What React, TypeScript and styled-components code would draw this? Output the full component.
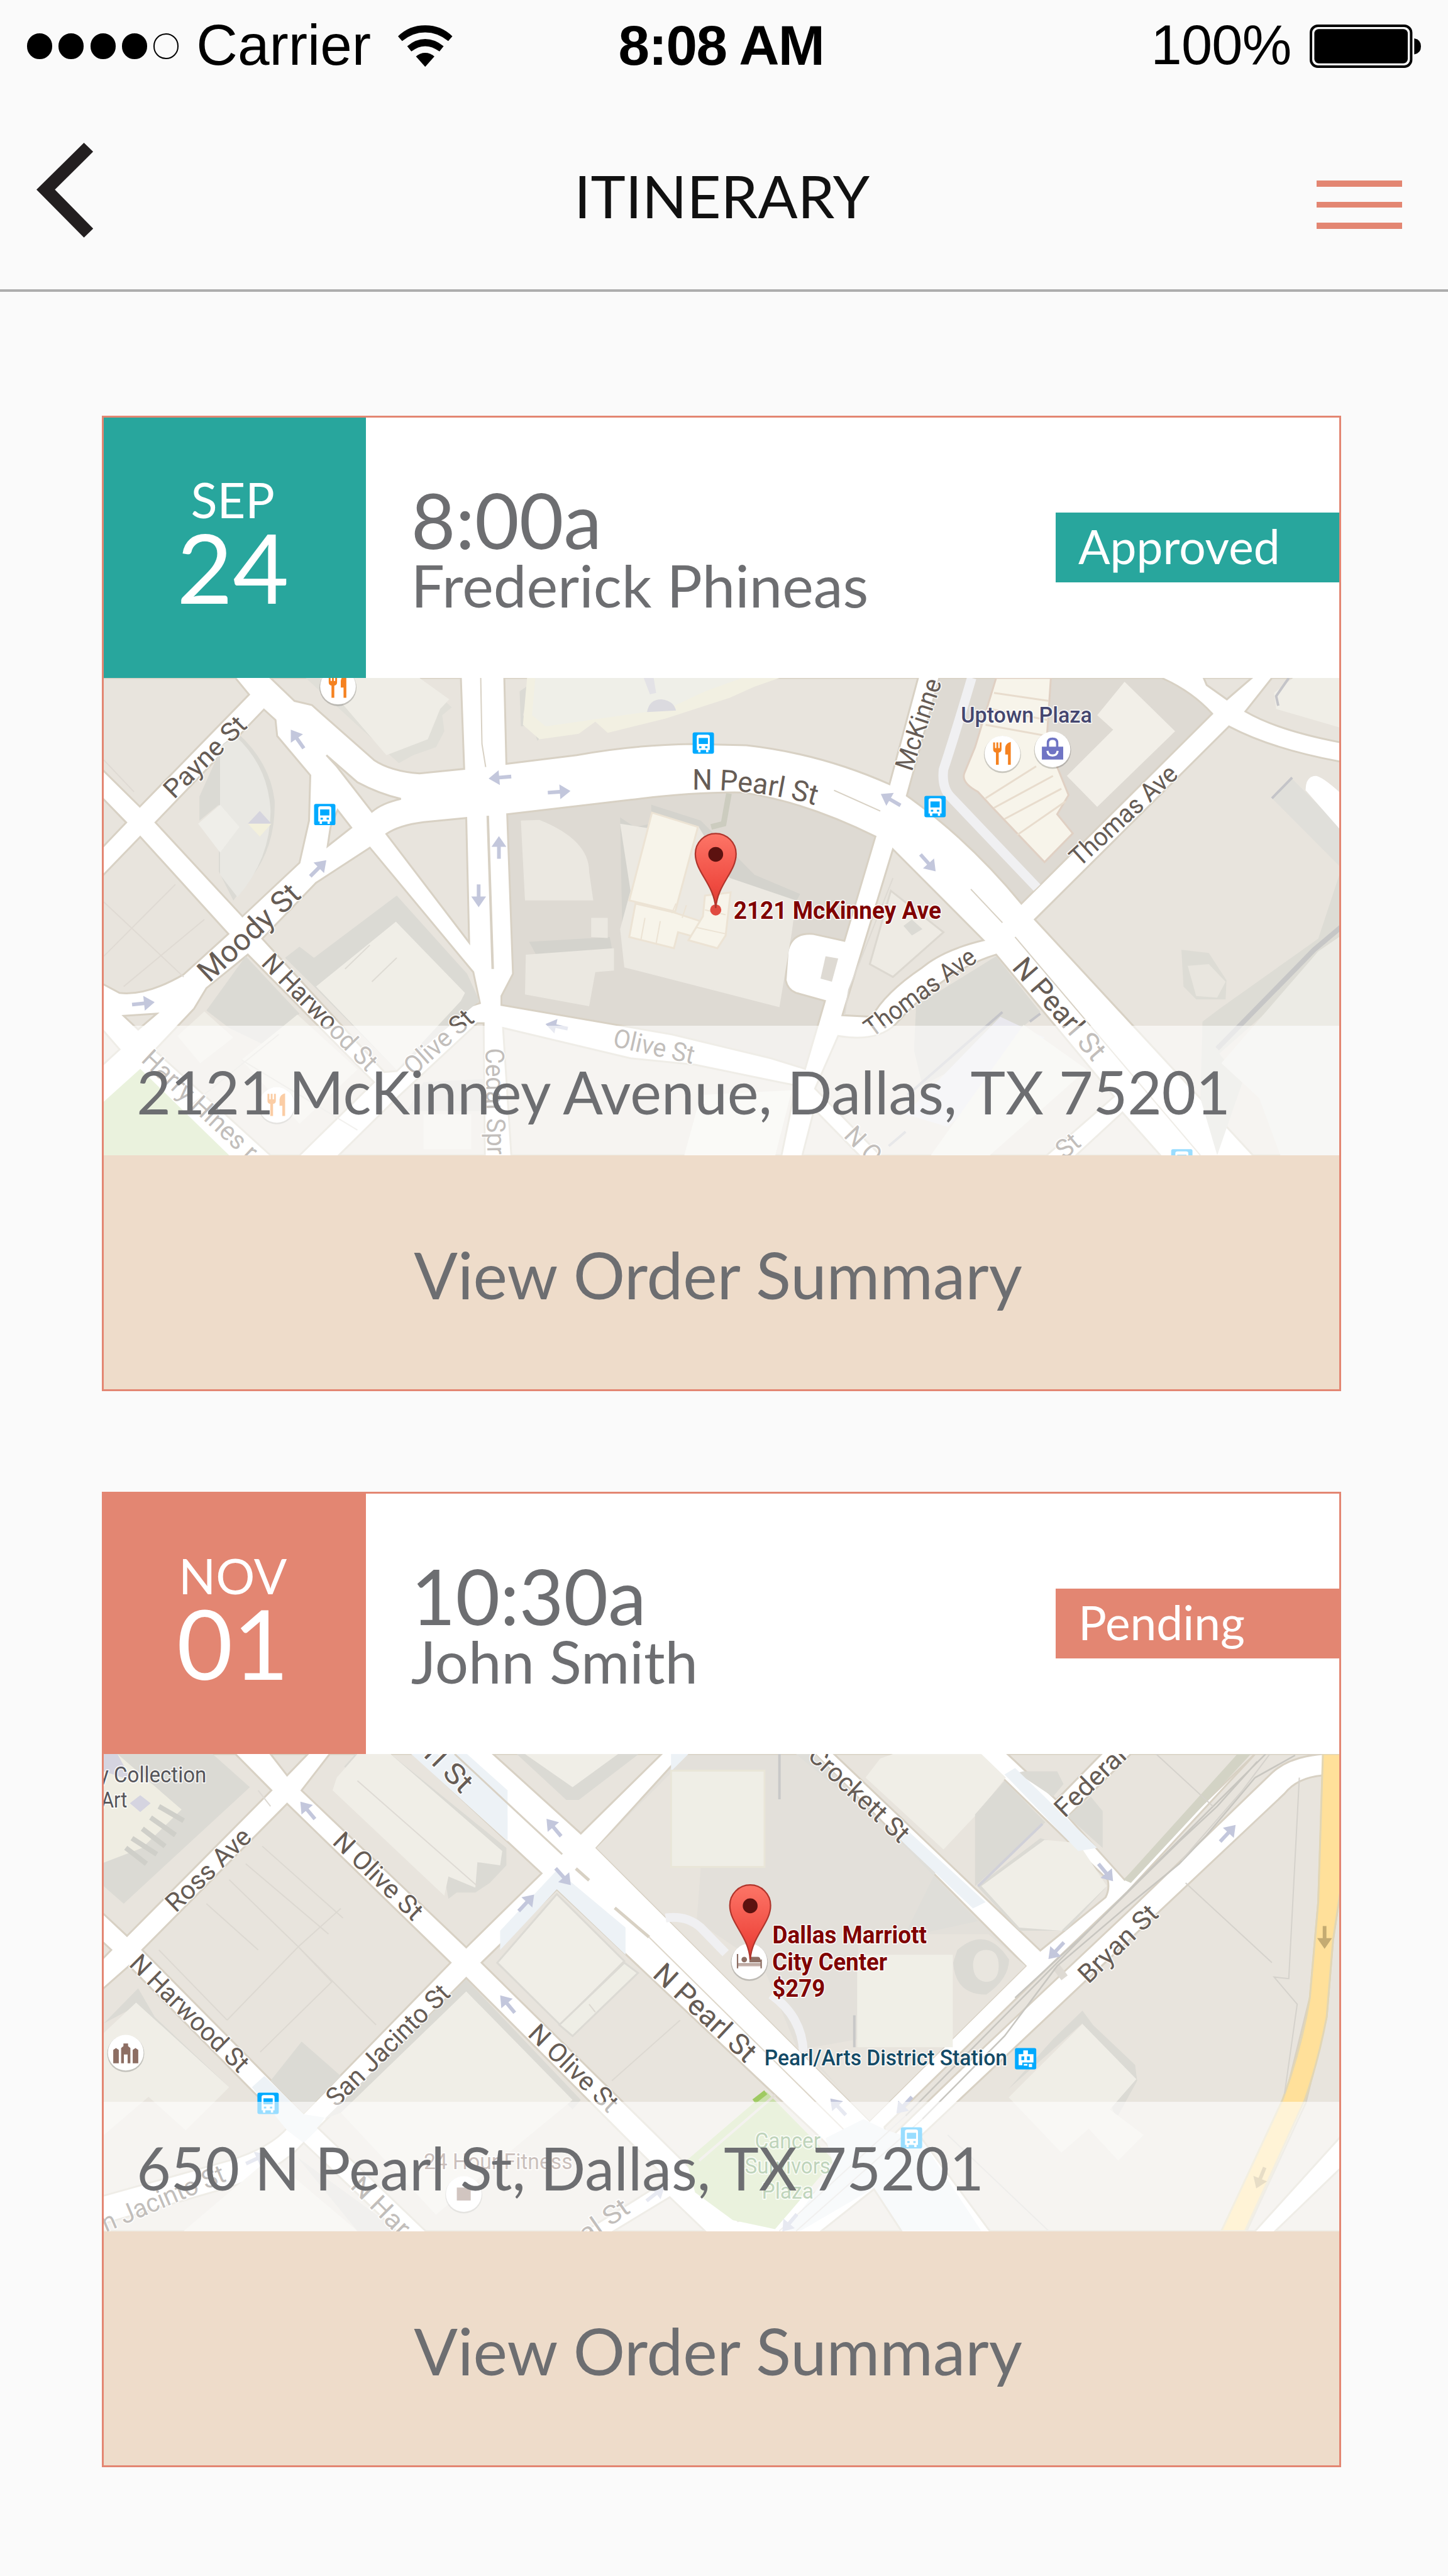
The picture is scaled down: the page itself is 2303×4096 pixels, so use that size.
import React from 'react';
import styled, { createGlobalStyle } from 'styled-components';

const TEAL = '#28a69d';
const CORAL = '#e38672';
const GREY = '#6d6e71';

const GlobalStyle = createGlobalStyle`
  * { box-sizing: border-box; }
  body { margin: 0; background: #fafafa; }
`;

const Screen = styled.main`
  width: 2303px;
  height: 4096px;
  background: #fafafa;
  font-family: Lato, "Noto Sans", sans-serif;
  overflow: hidden;
`;

/* ---------- status bar ---------- */

const StatusBar = styled.header`
  display: grid;
  grid-template-columns: 1fr auto 1fr;
  align-items: center;
  height: 147px;
  padding: 0 43px;
  color: #000;
  font-family: "Liberation Sans", Arial, sans-serif;
`;

const StatusGroup = styled.div<{ $end?: boolean }>`
  display: flex;
  align-items: center;
  justify-content: ${(p) => (p.$end ? 'flex-end' : 'flex-start')};
`;

const Signal = styled.div`
  display: flex;
  gap: 10.1px;
  margin-right: 28px;
`;

const Dot = styled.i<{ $on: boolean }>`
  width: 40.2px;
  height: 40.2px;
  border-radius: 50%;
  border: 2px solid #000;
  background: ${(p) => (p.$on ? '#000' : 'transparent')};
`;

const StatusText = styled.span<{ $size: number; $spacing?: number; $bold?: boolean }>`
  font-size: ${(p) => p.$size}px;
  font-weight: ${(p) => (p.$bold ? 700 : 400)};
  letter-spacing: ${(p) => p.$spacing ?? 0}px;
  line-height: 100px;
  padding-bottom: 3px;
  white-space: pre;
`;

const Clock = styled(StatusText)`
  margin-right: 9px;
`;

const Wifi = styled.svg`
  width: 86.5px;
  height: 66.2px;
  margin-left: 43px;
  display: block;
`;

const Battery = styled.svg`
  width: 177.3px;
  height: 69px;
  margin-left: 29px;
  display: block;
`;

/* ---------- navigation ---------- */

const NavBar = styled.nav`
  display: grid;
  grid-template-columns: 1fr auto 1fr;
  align-items: start;
  height: 317px;
  padding: 0 73.5px 0 58px;
  border-bottom: 4px solid #adadad;
`;

const BackIcon = styled.svg`
  display: block;
  width: 90.2px;
  height: 150.7px;
  margin-top: 80px;
`;

const Title = styled.h1`
  margin: 108px 0 0 9px;
  font-size: 93.7px;
  line-height: 1.2;
  font-weight: 400;
  color: #111;
`;

const MenuButton = styled.div`
  display: flex;
  flex-direction: column;
  gap: 24px;
  justify-self: end;
  width: 136px;
  margin-top: 140px;
`;

const MenuLine = styled.span`
  height: 9.7px;
  background: ${CORAL};
`;

/* ---------- cards ---------- */

const CardList = styled.section`
  display: flex;
  flex-direction: column;
  gap: 160px;
  padding: 197px 170px 0 162px;
`;

const Card = styled.article`
  display: flex;
  flex-direction: column;
  height: 1551px;
  border: 3px solid ${CORAL};
  background: #fff;
`;

const CardHeader = styled.div`
  display: flex;
  align-items: flex-start;
  height: 414px;
`;

const DateBox = styled.div<{ $tone: string }>`
  display: flex;
  flex-direction: column;
  align-items: center;
  width: 417.4px;
  height: 414px;
  padding: 92px 7px 0 0;
  background: ${(p) => p.$tone};
  color: #fff;
`;

const Month = styled.span`
  font-size: 77.6px;
  line-height: 1;
`;

const Day = styled.span`
  margin-top: -10px;
  font-size: 154px;
  line-height: 1;
`;

const Info = styled.div`
  display: flex;
  flex-direction: column;
  padding: 101.4px 0 0 71.4px;
  color: ${GREY};
  line-height: 1;
  white-space: nowrap;
`;

const Time = styled.span`
  font-size: 122px;
`;

const Name = styled.span`
  margin-top: -4.2px;
  font-size: 94px;
`;

const Badge = styled.span<{ $tone: string }>`
  display: flex;
  align-items: center;
  width: 451.4px;
  height: 111px;
  margin: 151px 0 0 auto;
  padding: 0 0 5px 36.3px;
  background: ${(p) => p.$tone};
  color: #fff;
  font-size: 74.9px;
  line-height: 1;
`;

const MapBox = styled.div`
  position: relative;
  height: 759px;
  overflow: hidden;
`;

const MapSvg = styled.svg`
  display: block;
  width: 100%;
  height: 100%;
`;

const AddressBar = styled.div`
  position: absolute;
  inset: auto 0 0 0;
  display: flex;
  align-items: center;
  height: 206.5px;
  padding: 4.5px 0 0 52.3px;
  background: rgba(255, 255, 255, 0.6);
  color: ${GREY};
  font-size: 94.05px;
  line-height: 1;
  white-space: nowrap;
`;

const SummaryButton = styled.div`
  flex: 1;
  display: flex;
  align-items: center;
  justify-content: center;
  padding: 6px 11px 0 0;
  background: #eedcca;
  color: ${GREY};
  font-size: 103px;
  line-height: 1;
`;

/* ---------- map drawing ---------- */

const Area = styled.path<{ $fill: string; $edge?: string }>`
  fill: ${(p) => p.$fill};
  stroke: ${(p) => p.$edge ?? 'none'};
  stroke-width: 3px;
  vector-effect: non-scaling-stroke;
`;

const Line = styled.path<{ $color: string; $w: number }>`
  fill: none;
  stroke: ${(p) => p.$color};
  stroke-width: ${(p) => p.$w}px;
  vector-effect: non-scaling-stroke;
`;

const Label = styled.text<{ $size: number; $color: string; $weight: number }>`
  font-family: Roboto, "Open Sans", sans-serif;
  font-size: ${(p) => p.$size}px;
  font-weight: ${(p) => p.$weight};
  fill: ${(p) => p.$color};
  stroke: #fff;
  stroke-opacity: 0.75;
  stroke-width: 5px;
  stroke-linejoin: round;
  paint-order: stroke;
`;

const LAND = '#e8e4dd';
const DARK = '#dedad3';
const SHADE = '#dbdad4';
const BUILD = '#f0eee7';
const CREAM = '#f7f4ea';
const PARK = '#cadfaa';
const EDGE = '#d8d1c4';
const LANE = '#f0f0f2';
const HAZE = '#edf2f6';

type Shape = [fill: string, d: string, edge?: string];
type Stroke = [color: string, w: number, d: string];
type Pos = { x: number; y: number; r?: boolean };

/* Map sheets are drawn in two halves; the right half has its own origin. */
const RIGHT = 'translate(1456 0) scale(1.01786 1)';
const place = ({ x, y, r }: Pos) => `translate(${r ? 1456 + 1.01786 * x : x} ${y}) scale(1.12 1.452)`;

const Shapes = ({ items }: { items: Shape[] }) => (
  <>{items.map(([f, d, e], i) => <Area key={i} d={d} $fill={f} $edge={e} />)}</>
);
const Strokes = ({ items }: { items: Stroke[] }) => (
  <>{items.map(([c, w, d], i) => <Line key={i} d={d} $color={c} $w={w} />)}</>
);

type TextProps = Pos & { t: string; a?: number; len: number; size?: number; color?: string; weight?: number };
const T = ({ t, a = 0, len, size = 56, color = '#665c55', weight = 400, ...p }: TextProps) => (
  <g transform={`${place(p)} rotate(${a})`}>
    <Label textAnchor="middle" dy="0.35em" textLength={len} lengthAdjust="spacingAndGlyphs" $size={size} $color={color} $weight={weight}>{t}</Label>
  </g>
);

const Arrow = ({ a, color = '#c3c7dc', ...p }: Pos & { a: number; color?: string }) => (
  <g transform={`${place(p)} rotate(${a})`}>
    <path d="M-24,-4 H2 V-16 L25,0 L2,16 V4 H-24Z" fill={color} />
  </g>
);

const Bus = (p: Pos) => (
  <g transform={place(p)}>
    <rect x="-23" y="-23" width="46" height="46" rx="4" fill="#00aaff" />
    <path d="M-14,-14 Q-14,-18 -9,-18 H9 Q14,-18 14,-14 V15 H11 V20 H6 V15 H-6 V20 H-11 V15 H-14Z" fill="#fff" />
    <rect x="-10" y="-11" width="20" height="13" fill="#00aaff" />
    <rect x="-9" y="7" width="5" height="4" fill="#00aaff" />
    <rect x="4" y="7" width="5" height="4" fill="#00aaff" />
  </g>
);

const Station = (p: Pos) => (
  <g transform={place(p)}>
    <rect x="-23" y="-23" width="46" height="46" rx="4" fill="#00aaff" />
    <path d="M-5,-18 H5 V-10 H17 V8 H-7 V14 H-15 V-10 H-5Z" fill="#fff" />
    <path d="M-9,-5 H-3 V3 H-9Z M3,-5 H9 V3 H3Z" fill="#00aaff" />
    <path d="M-4,11 H4 V15 H-4Z M7,11 H14 V18 H7Z" fill="#fff" />
  </g>
);

const Disc = () => (
  <>
    <circle cy="2" r="40" fill="#000" opacity="0.18" />
    <circle r="38.5" fill="#fff" />
  </>
);

const Food = (p: Pos) => (
  <g transform={place(p)}>
    <Disc />
    <path d="M-20,-24 H-16 V-12 H-13 V-24 H-9 V-12 H-6 V-24 H-2 V-9 Q-2,-3 -8,-2 V24 H-14 V-2 Q-20,-3 -20,-9Z" fill="#f58220" />
    <path d="M18,-25 V24 H12 V2 H6 V-12 Q7,-23 18,-25Z" fill="#f58220" />
  </g>
);

const Shop = (p: Pos) => (
  <g transform={place(p)}>
    <Disc />
    <path d="M-23,-6 H23 V22 H-23Z" fill="#6f74c4" />
    <path d="M-10,-5 V-14 Q-10,-23 0,-23 Q10,-23 10,-14 V-5" fill="none" stroke="#6f74c4" strokeWidth="5" />
    <path d="M-11,3 Q-10,13 0,13 Q10,13 11,3" fill="none" stroke="#fff" strokeWidth="4.5" />
  </g>
);

const Museum = (p: Pos) => (
  <g transform={place(p)}>
    <Disc />
    <path d="M-27,-6 L-21,-10 L-15,-6 V23 H-27Z M15,-6 L21,-10 L27,-6 V23 H15Z M-10,23 V-10 L-5,-14 V-20 H5 V-14 L10,-10 V23 H4 V4 H-4 V23Z" fill="#8d6e63" />
  </g>
);

const Gym = (p: Pos) => (
  <g transform={place(p)}>
    <Disc />
    <rect x="-15" y="-14" width="30" height="28" fill="#8d6e63" />
  </g>
);

const Hotel = (p: Pos) => (
  <g transform={place(p)}>
    <Disc />
    <path d="M-27,-16 H-24 V4 H24 V-4 H27 V15 H24 V10 H-24 V15 H-27Z M0,-10 H18 Q24,-10 24,-2 V2 H0Z" fill="#8d6e63" />
    <circle cx="-11" cy="-4" r="6" fill="#8d6e63" />
    <rect x="-24" y="5" width="48" height="5" fill="#c4b0a9" />
  </g>
);

const Pin = ({ dot, id, ...p }: Pos & { dot?: boolean; id: string }) => (
  <g transform={place(p)}>
    <defs>
      <linearGradient id={id} x1="0" y1="0" x2="0" y2="1">
        <stop offset="0" stopColor="#fd7567" />
        <stop offset="0.7" stopColor="#ef4a40" />
        <stop offset="1" stopColor="#d93a30" />
      </linearGradient>
    </defs>
    {dot && <circle r="12" fill="#e04b41" />}
    <path d="M0,-4 C-4,-56 -44,-82 -44,-121 A44 44 0 1 1 44,-121 C44,-82 4,-56 0,-4Z" fill={`url(#${id})`} stroke="#b0352c" strokeWidth="3" />
    <circle cy="-120" r="16" fill="#5c1210" />
  </g>
);

const MapMcKinney = () => (
  <MapSvg viewBox="26.8 33 2986.3 1496" preserveAspectRatio="none">
    <rect x="0" y="0" width="3100" height="1600" fill="#fff" />
    <Shapes items={[
      [LAND, 'M0,33 H345 L378,85 114,436 0,290Z', EDGE],
      [LAND, 'M0,378 L81,486 0,596Z', EDGE],
      [LAND, 'M115,531 L328,835 220,962 Q130,1030 65,1020 L0,975 V685Z', EDGE],
      [LAND, 'M152,486 L414,132 442,165 446,215 526,338 523,480 500,612 362,780Z', EDGE],
      [SHADE, 'M258,405 L315,240 350,205 Q430,300 440,420 Q442,560 385,655 L340,730 305,640 305,430 258,480Z'],
      ['#e9e8e3', 'M308,250 L345,215 Q425,310 430,450 Q430,600 350,720 L308,650Z'],
      ['#efeee9', 'M308,430 L355,500 308,580 255,490Z'],
      ['#d5d4de', 'M404,450 L432,490 H375Z'],
      ['#f3f0dc', 'M375,490 H432 L404,530Z'],
      [LAND, 'M430,33 H890 L898,318 790,332 Q720,325 680,290 L530,118 488,105Z', EDGE],
      ['#e0dfd8', 'M515,33 L740,300 775,275 830,250 850,200 845,150 868,125 790,33Z'],
      ['#efede6', 'M550,33 L710,275 810,225 840,130 862,100 790,33Z'],
      [LAND, 'M995,33 H1995 L1926,366 Q1760,270 1580,244 L1450,240 Q1300,243 1170,275 L1000,302Z', EDGE],
      [SHADE, 'M1032,75 L1035,185 1062,180 1075,230 1085,215 1040,150 1060,50Z'],
      ['#f2f0e2', 'M1050,33 L1040,180 1080,225 1175,208 1215,170 1245,205 1385,160 1540,95 1600,60 1660,33Z'],
      ['#efefe8', 'M1070,33 L1062,150 1095,185 1390,130 1480,75 1570,33Z'],
      ['#dbdadf', 'M1340,140 Q1345,100 1375,100 Q1405,105 1410,135Z'],
      ['#e3e2e6', 'M1332,33 H1356 L1362,80 1347,84Z'],
      [LAND, 'M565,275 L640,360 Q690,395 745,412 Q700,425 675,452 L590,310Z', EDGE],
      [LAND, 'M575,500 L592,447 625,502 568,560Z', EDGE],
      [LAND, 'M710,522 Q740,495 800,485 L903,472 910,862Z', EDGE],
      [LAND, 'M670,565 L920,955 936,1052 Q900,1065 880,1085 L735,1265 705,1268 410,850 540,675Z', EDGE],
      [SHADE, 'M465,910 L500,875 535,910 735,715 905,960 935,1045 735,1262 535,1000Z'],
      [BUILD, 'M733,797 L900,1020 890,1045 735,1262 540,1000Z'],
      [LAND, 'M375,900 L680,1300 500,1529 430,1529 150,1200 245,1070 275,1005Z', EDGE],
      [SHADE, 'M370,905 L500,1085 410,1180 330,1130 275,1075Z'],
      [BUILD, 'M270,1078 L340,1160 260,1240 205,1155Z'],
      [BUILD, 'M495,1088 L640,1260 500,1430 360,1230Z'],
      [PARK, 'M0,1392 L115,1258 330,1529 0,1529Z'],
      [LAND, 'M0,1100 L65,1197 0,1275Z', EDGE],
      [LAND, 'M75,1092 L155,1085 110,1135Z', EDGE],
      [LAND, 'M945,1115 L948,1529 H595 L735,1350 930,1115Z', EDGE],
      [SHADE, 'M800,1300 L945,1290 V1390 H760Z'],
      [BUILD, 'M800,1400 H915 V1510 H800Z'],
      [DARK, 'M1002,460 L1300,415 Q1450,390 1570,392 Q1720,420 1892,530 L1817,857 1740,835 Q1690,830 1680,890 L1675,980 Q1680,1010 1700,1020 L1770,1045 1722,1258 1640,1225 1400,1150 988,1058 V1030 L1016,960Z', EDGE],
      ['#ebe8e1', 'M1035,480 L1080,478 Q1200,540 1200,640 L1210,730 H1045Z'],
      ['#d4d3cd', 'M1055,860 L1250,845 1255,880 1080,920Z'],
      ['#ebe8e1', 'M1047,900 L1260,880 V950 L1215,955 1200,1062 1045,1025Z'],
      ['#ebe8e1', 'M1205,785 H1245 V848 L1205,845Z'],
      ['#d4d3cd', 'M1275,470 L1310,500 1350,490 V430 L1470,480 1600,650 1710,710 1690,760 1540,690 1280,820Z'],
      ['#ece9e2', 'M1275,490 L1350,505 V460 L1465,500 1540,660 1700,730 1690,830 1660,1065 1285,940 1275,820 1300,700Z'],
      [CREAM, 'M1352,455 L1463,500 1408,765 1297,730Z', '#ece3d4'],
      [CREAM, 'M1312,740 L1405,768 1480,800 1470,850 1415,830 1405,880 1297,845Z', '#ece3d4'],
      [CREAM, 'M1480,715 L1542,705 1530,840 1510,880 1440,855 1475,780Z', '#ece3d4'],
      [LAND, 'M992,1130 L1300,1225 1456,1245 1660,1300 1700,1310 1665,1529 H1012Z', EDGE],
      ['#f2f2ea', 'M1430,1529 L1470,1340 1690,1325 1650,1529Z'],
    ]} />
    <Strokes items={[
      [EDGE, 2, 'M938,33 L941,240 950,312'],
      [EDGE, 4, 'M955,465 L967,945'],
      ['#dfdad3', 2, 'M27,735 L220,970 M27,905 L200,680 M75,1000 L270,790 M27,290 L100,390'],
      ['#ccccbf', 9, 'M1538,395 L1525,490 1495,500'],
      ['#dedbd4', 2, 'M610,945 L670,870 M675,985 L735,910 M360,1230 L640,1450 M230,1380 L450,1150'],
      ['#ece3d4', 2, 'M1335,785 L1325,855 M1372,795 L1362,865 M1410,740 L1400,770 M1435,745 L1425,785 M1480,760 L1530,775 M1460,815 L1530,835'],
    ]} />
    <g transform={RIGHT}>
      <Shapes items={[
        [DARK, 'M580,33 H1108 Q1180,75 1228,145 L775,740 Q650,540 503,402Z', EDGE],
        [CREAM, 'M715,33 H845 L835,230 887,400 860,460 897,520 830,610 700,430 672,390 Q630,360 640,330 L665,250Z', '#e0d0c3'],
        ['#f2efe8', 'M1020,45 L1140,200 955,437 883,340 993,195 955,150Z'],
        [LAND, 'M1208,33 H1322 L1263,100 1215,55Z', EDGE],
        [LAND, 'M1370,33 H1600 V250 Q1400,210 1307,138Z', EDGE],
        [BUILD, 'M1420,33 H1600 V215 L1380,130 1375,80Z'],
        [LAND, 'M1268,185 Q1390,270 1600,310 V1529 H1325 L807,790Z', EDGE],
        ['#e0dfda', 'M1415,345 L1600,590 V715 L1370,410Z'],
        ['#fff', 'M1450,385 Q1450,340 1475,340 Q1500,345 1600,480 V610Z'],
        ['#dddcd5', 'M1205,1110 L1245,1070 1480,850 1530,650 1600,600 V800 L1245,1210 1300,1300 1240,1529 1200,1350Z'],
        ['#ecebe5', 'M1600,780 V1529 H1390 L1340,1350 1250,1240 1480,890Z'],
        ['#dddcd5', 'M1155,885 L1220,895 1262,980 1260,1040 1190,1040 1160,1000Z'],
        ['#e9e6df', 'M1170,935 L1220,930 1260,985 1240,1035 1190,1030Z'],
        [LAND, 'M470,570 L685,855 Q590,885 540,940 Q450,1020 420,1095 L350,1090Z', EDGE],
        ['#eeebe4', 'M465,700 L590,830 470,970 415,930Z', '#dcd8d0'],
        [SHADE, 'M495,810 L515,790 540,820 515,840Z'],
        [DARK, 'M310,905 L340,912 325,985 298,975Z'],
        [LAND, 'M715,900 L995,1345 835,1529 H440 L285,1320 340,1155 Q430,1175 475,1120 Q590,950 715,900Z', EDGE],
        [SHADE, 'M525,1060 L715,905 820,1080 730,1180 540,1310 520,1200Z'],
        ['#e9e8ee', 'M725,1095 L830,1160 600,1440 500,1400Z'],
        ['#f1efe8', 'M780,1120 L930,1260 700,1529 H560Z'],
        [LAND, 'M283,1385 L390,1529 H255Z', EDGE],
        [LAND, 'M1015,1395 L1105,1529 H905Z', EDGE],
      ]} />
      <Strokes items={[
        [LANE, 15, 'M657,33 Q620,200 590,320 Q585,380 610,410 L812,690'],
        ['#e8dccd', 3, 'M710,80 L840,105 M700,130 L838,165 M690,180 L836,215 M690,410 L810,310 M710,440 L850,340 M735,475 L870,380 M765,525 L880,420'],
        [EDGE, 2, 'M655,695 L730,800 M330,385 L440,450 M760,845 L1200,1529'],
        ['#c6c6c6', 8, 'M1240,1195 L1470,885 1600,740'],
        ['#c4c4c8', 4, 'M505,1340 L730,1080 M795,1110 L820,1085 M460,1500 L500,1455 M1410,33 L1380,90 1385,120 M1370,410 L1418,345'],
        ['#dedad3', 2, 'M355,1090 L365,1010 470,660'],
      ]} />
    </g>
    <Arrow x={495} y={225} a={-125} />
    <Arrow x={985} y={345} a={175} />
    <Arrow x={1127} y={390} a={-4} />
    <Arrow x={982} y={565} a={-90} />
    <Arrow x={933} y={715} a={90} />
    <Arrow x={545} y={630} a={-45} />
    <Arrow x={122} y={1053} a={-6} />
    <Arrow x={1122} y={1125} a={192} />
    <Arrow r x={465} y={415} a={-150} />
    <Arrow r x={553} y={612} a={48} />
    <T t="Payne St" x={271} y={280} a={-44.6} len={225} />
    <T t="Moody St" x={377} y={830} a={-43} len={275} size={65} />
    <T t="N Harwood St" x={550} y={1080} a={45.4} len={328} />
    <T t="Olive St" x={836} y={1174} a={-42} len={180} />
    <T t="Cedar Spr" x={974} y={1360} a={89} len={230} />
    <T t="Harry Hines r" x={260} y={1370} a={43} len={318} />
    <T t="Olive St" x={1357} y={1187} a={12.5} len={178} />
    <g transform="scale(1.12 1.452)">
      <path id="pearl-bend" d="M1294,264 Q1440,262 1568,300" fill="none" />
      <Label $size={62} $color="#665c55" $weight={400}>
        <textPath href="#pearl-bend" textLength={268} lengthAdjust="spacingAndGlyphs">N Pearl St</textPath>
      </Label>
    </g>
    <T r t="McKinne" x={530} y={178} a={-71.5} len={205} />
    <T r t="Thomas Ave" x={1017} y={463} a={-42.5} len={292} />
    <T r t="Thomas Ave" x={534} y={1017} a={-36} len={283} />
    <T r t="N Pearl St" x={866} y={1070} a={49} len={270} size={62} />
    <T r t="N O" x={400} y={1496} a={46} len={88} />
    <T r t="St" x={885} y={1498} a={-40} len={50} />
    <T r t="Uptown Plaza" x={787} y={148} len={283} size={48} color="#44466f" weight={500} />
    <Bus x={561} y={461} />
    <Bus x={1476} y={237} />
    <Bus r x={570} y={436} />
    <Bus r x={1156} y={1543} />
    <Food x={593} y={60} />
    <Food x={445} y={1371} />
    <Food r x={730} y={270} />
    <Shop r x={849} y={257} />
    <Pin id="pin-mckinney" x={1506} y={760} dot />
    <T r t="2121 McKinney Ave" x={338} y={760} len={448} size={53} color="#800000" weight={700} />
  </MapSvg>
);

const MapPearl = () => (
  <MapSvg viewBox="26.8 36 2986.3 1496" preserveAspectRatio="none">
    <rect x="0" y="0" width="3100" height="1600" fill="#fff" />
    <Shapes items={[
      [LAND, 'M0,36 H345 L432,150 83,606 0,505Z', EDGE],
      [SHADE, 'M0,36 H290 L380,140 75,505 0,420Z'],
      ['#efede2', 'M0,36 H60 L215,210 120,330 0,390Z'],
      ['#d5d4e0', 'M27,36 H60 L95,120 27,90Z M115,165 L140,190 115,218 90,190Z'],
      [LAND, 'M430,36 H520 L470,103Z', EDGE],
      [LAND, 'M573,36 H775 L1085,410 903,642 505,150Z', EDGE],
      [SHADE, 'M608,75 L635,36 H720 L1000,330 1000,385 960,440 925,470 880,470 860,490 850,420Z'],
      [BUILD, 'M640,36 H720 L990,340 985,385 930,375 925,455 860,420 850,480 580,150 590,110Z'],
      [HAZE, 'M850,36 H905 L1003,150 V310 L770,36Z'],
      [LAND, 'M968,36 H1375 L1180,285Z', EDGE],
      [SHADE, 'M1025,36 H1320 L1175,180 1145,180Z'],
      [BUILD, 'M1045,36 H1270 L1160,140Z'],
      ['#e3e0da', 'M1425,36 H1746 L2255,700 1878,1185 1218,330Z', EDGE],
      [LAND, 'M1425,60 L1398,95 V390 H1470 L1460,560 1620,700 1700,950 1860,1150 1878,1185 1218,330Z'],
      [LAND, 'M1850,600 H2165 L2255,700 1878,1185 1720,960 1850,930Z'],
      ['#dfded9', 'M1700,36 H1746 L2140,560 1960,610 2040,400Z'],
      [HAZE, 'M1398,36 H1440 L1398,90Z'],
      ['#efeee6', 'M1398,88 H1624 V390 H1398Z', '#e9e6d8'],
      ['#f0efe7', 'M1848,665 H2079 V955 H1848Z'],
      [SHADE, 'M2090,650 Q2160,570 2215,680 Q2215,740 2160,790 Q2085,790 2080,690Z'],
      ['#e9e6df', 'M2160,650 Q2190,650 2190,700 Q2190,750 2158,750 Q2128,745 2128,695 Q2130,650 2160,650Z'],
      [LAND, 'M0,595 L45,650 0,710Z', EDGE],
      [LAND, 'M470,192 L865,690 510,1162 120,650Z', EDGE],
      [SHADE, 'M505,937 L600,1045 510,1162 430,1060Z'],
      [LAND, 'M88,700 L472,1205 Q430,1270 330,1310 L0,1430 V800Z', EDGE],
      [SHADE, 'M27,880 L110,770 150,860 330,1080 300,1110 100,830Z'],
      [BUILD, 'M27,910 L105,815 330,1080 225,1215 135,1110 27,1230Z'],
      [HAZE, 'M385,1080 L415,1045 510,1165 560,1175 545,1210 510,1255 470,1215Z'],
      [LAND, 'M903,738 L1390,1370 1190,1531 H805 L545,1208Z', EDGE],
      [SHADE, 'M903,742 L1180,1120 1160,1150 900,800 600,1160 560,1180Z'],
      [BUILD, 'M903,780 L1160,1120 1010,1280 830,1480 600,1160Z'],
      [LAND, 'M1122,460 L1757,1236 1850,1360 1560,1500 1480,1380 940,690Z', EDGE],
      [HAZE, 'M1122,400 L1288,580 V665 L1122,460 985,650 V590Z'],
      [BUILD, 'M1122,475 L1285,685 1130,885 978,690Z', '#dcdad4'],
      ['#efeee6', 'M1285,690 L1318,722 1160,920 1128,885Z', '#dcdad4'],
      [LAND, 'M510,1255 L735,1531 H0 V1518 L340,1390 Q450,1340 510,1255Z', EDGE],
      [SHADE, 'M495,1300 L740,1531 H640Z'],
      [BUILD, 'M220,1531 L430,1300 640,1531Z'],
      [LAND, 'M1395,1425 L1480,1531 H1260Z', EDGE],
    ]} />
    <Strokes items={[
      [EDGE, 3, 'M875,36 L1135,350'],
      [EDGE, 5, 'M1168,395 L1200,432 M1262,518 L1345,610'],
      ['#ded7ca', 2, 'M1345,610 L1860,1270'],
      ['#dcd8d1', 2, 'M410,325 L605,550 M370,380 L570,600 M330,430 L497,640 685,885 M275,505 L400,650 M325,870 L497,640 600,520 M405,970 L578,750 497,640 M160,650 L325,870 M1255,1060 L1420,870 M1200,820 L1215,845'],
      ['#dedad4', 2, 'M640,120 L930,450 M400,150 L430,200'],
      ['#cfcfc9', 8, 'M80,330 L130,380 M95,300 L155,350 M120,270 L175,325 M140,235 L200,290 M160,200 L220,245'],
      [LANE, 14, 'M1385,550 Q1435,540 1470,580 L1530,660 M1640,790 Q1715,860 1718,970'],
      ['#c8c8c8', 4, 'M1660,36 V178 M1841,855 V955'],
    ]} />
    <g transform={RIGHT}>
      <Shapes items={[
        [LAND, 'M330,36 H672 L980,430 Q985,460 975,485 L820,652Z', EDGE],
        [BUILD, 'M405,110 L440,50 470,36 H680 L738,110 665,230 590,335Z'],
        [SHADE, 'M735,120 L832,250 665,450 V225Z'],
        [SHADE, 'M670,450 L820,300 850,310 975,455 880,590 770,590Z'],
        [BUILD, 'M830,305 L910,315 978,450 870,590 770,580 680,450Z'],
        [HAZE, 'M500,270 L690,500 660,520 480,295Z'],
        [LAND, 'M742,36 H965 L858,180Z', EDGE],
        [LAND, 'M1035,36 H1330 L1020,430 885,232Z', EDGE],
        [SHADE, 'M940,170 L968,215 V330 L885,232Z M765,95 L780,90 860,90 875,130 850,170Z'],
        [HAZE, 'M735,100 L760,80 955,330 910,340Z'],
        ['#d3d3c5', 'M1288,36 H1320 L1035,440 1018,430Z'],
        [LAND, 'M1330,36 H1490 Q1410,45 1370,95 L1040,515 690,950 455,1250 450,1205 850,690 1025,470Z', EDGE],
        [LAND, 'M1490,103 Q1430,110 1400,160 L535,1235 700,1531 H1250 L1400,1120 1460,800 1480,500Z', EDGE],
        [SHADE, 'M745,1085 L850,930 920,840 945,885 1045,1010 1050,1060 1000,1180 920,880Z'],
        [BUILD, 'M920,882 L1048,1055 985,1150 1065,1230 1005,1310 935,1210 870,1285 745,1112Z'],
        [LAND, 'M1540,400 L1515,620 1500,860 1450,1130 1310,1531 H1330 L1540,1225Z', EDGE],
        [LAND, 'M1540,1325 V1531 H1378Z', EDGE],
        ['#ffe09a', 'M1491,36 H1540 V400 L1515,620 1500,860 Q1480,1000 1448,1120 L1306,1531 H1250 L1395,1120 Q1440,960 1460,800 L1480,500Z', '#e2d6b4'],
        [PARK, 'M170,1095 L330,1310 190,1525 90,1497 0,1410 -20,1310Z'],
        [HAZE, 'M400,1180 L455,1215 540,1250 680,1531 H490 L420,1400 250,1531 215,1531 330,1330 310,1240Z'],
        [LAND, 'M425,1400 L490,1531 H300Z', EDGE],
        [DARK, 'M850,710 L865,695 885,730 870,745Z'],
      ]} />
      <Strokes items={[
        ['#9fca62', 8, 'M140,1125 L168,1096'],
        ['#e3dfd6', 4, 'M10,1310 L190,1105'],
        ['#c8c6c0', 2.5, 'M1355,36 L1040,450 500,1170 M1335,60 L1240,200 1150,310 950,570 760,800 M1425,40 L1330,110 1215,290 1150,380 1020,520 860,700 735,920 540,1180'],
        ['#dcdad6', 2, 'M540,1180 L240,1531 M500,1170 L200,1531'],
        ['#d5d2cc', 2, 'M1365,36 L1300,150 1155,370 M1095,36 L1230,200 M1165,440 L1370,690 M1435,110 L1410,740 1375,735 1430,820 1400,1100 M600,1230 L840,1531'],
        ['#d0d0d8', 4, 'M825,255 L672,450'],
      ]} />
    </g>
    <Arrow x={520} y={213} a={-130} />
    <Arrow x={1115} y={267} a={-130} />
    <Arrow x={1137} y={420} a={48} />
    <Arrow x={1048} y={503} a={-47} />
    <Arrow x={1003} y={820} a={-130} />
    <Arrow x={395} y={1305} a={-25} />
    <Arrow x={1360} y={1415} a={-38} />
    <Arrow r x={975} y={407} a={50} />
    <Arrow r x={1265} y={285} a={-47} />
    <Arrow r x={858} y={652} a={133} />
    <Arrow r x={497} y={1136} a={133} />
    <Arrow r x={340} y={1142} a={-133} />
    <Arrow r x={225} y={1505} a={130} />
    <Arrow r x={1495} y={610} a={90} color="#c4ab72" />
    <Arrow r x={1343} y={1364} a={112} color="#c4ab72" />
    <T t="y Collection" x={145} y={100} len={232} size={48} color="#55555a" />
    <T t="Art" x={52} y={179} len={56} size={48} color="#55555a" />
    <T t="Ross Ave" x={279} y={398} a={-44} len={232} />
    <T t="N Olive St" x={691} y={418} a={44} len={245} />
    <T t="rl St" x={862} y={80} a={45} len={118} size={62} />
    <T t="N Harwood St" x={235} y={848} a={44.5} len={335} />
    <T t="San Jacinto St" x={713} y={948} a={-44.4} len={348} />
    <T t="N Olive St" x={1163} y={1020} a={44} len={245} />
    <T t="N Pearl St" x={1481} y={846} a={43} len={278} size={62} />
    <T t="n Jacinto St" x={170} y={1428} a={-23} len={285} />
    <T t="N Har" x={697} y={1453} a={45} len={155} />
    <T t="al St" x={1235} y={1497} a={-35} len={120} />
    <T r t="Crockett St" x={390} y={161} a={43} len={275} />
    <T r t="Federal" x={938} y={122} a={-44} len={190} />
    <T r t="Bryan St" x={1004} y={630} a={-44} len={215} />
    <T t="24 Hour Fitness" x={980} y={1313} len={321} size={48} color="#7b5f56" />
    <T r t="Cancer" x={220} y={1247} len={142} size={48} color="#5f9455" />
    <T r t="Survivors" x={220} y={1327} len={185} size={48} color="#5f9455" />
    <T r t="Plaza" x={220} y={1405} len={112} size={48} color="#5f9455" />
    <T r t="Pearl/Arts District Station" x={453} y={987} len={524} size={48} color="#134a66" weight={500} />
    <Station r x={785} y={991} />
    <Bus x={424} y={1131} />
    <Bus r x={514} y={1239} />
    <Museum x={80} y={972} />
    <Gym x={897} y={1415} />
    <Hotel r x={129} y={686} />
    <Pin id="pin-pearl" r x={131} y={686} />
    <T r t="Dallas Marriott" x={367} y={602} len={333} size={53} color="#800000" weight={700} />
    <T r t="City Center" x={320} y={687} len={248} size={53} color="#800000" weight={700} />
    <T r t="$279" x={246} y={770} len={114} size={53} color="#800000" weight={700} />
  </MapSvg>
);

const stops = [
  { month: 'SEP', day: '24', time: '8:00a', name: 'Frederick Phineas', status: 'Approved', tone: TEAL, address: '2121 McKinney Avenue, Dallas, TX 75201', Map: MapMcKinney },
  { month: 'NOV', day: '01', time: '10:30a', name: 'John Smith', status: 'Pending', tone: CORAL, address: '650 N Pearl St, Dallas, TX 75201', Map: MapPearl },
];

export default function App() {
  return (
    <Screen>
      <GlobalStyle />
      <StatusBar>
        <StatusGroup>
          <Signal>{[1, 1, 1, 1, 0].map((on, i) => <Dot key={i} $on={!!on} />)}</Signal>
          <StatusText $size={90.9}>Carrier</StatusText>
          <Wifi viewBox="864 130 118 220" preserveAspectRatio="none">
            <path d="M864,189 Q888,131 923,131 Q958,131 982,189 L973,214 Q950,168 923,168 Q896,168 873,214Z" />
            <path d="M884,241 Q902,203 923,203 Q944,203 963,241 L954,269 Q938,241 923,241 Q908,241 893,269Z" />
            <path d="M903,295 Q912,276 923,276 Q934,276 943,295 L923,350Z" />
          </Wifi>
        </StatusGroup>
        <Clock $size={89} $spacing={-1.6} $bold>8:08 AM</Clock>
        <StatusGroup $end>
          <StatusText $size={88.4} $spacing={-0.7}>100%</StatusText>
          <Battery viewBox="0 0 177.3 69">
            <rect x="2" y="2" width="159.4" height="65" rx="11" fill="none" stroke="#000" strokeWidth="4" />
            <rect x="7.4" y="7.2" width="148.6" height="54.6" rx="7" />
            <path d="M166.3,22 Q177,24 177,34.7 Q177,45.5 166.3,47.5Z" />
          </Battery>
        </StatusGroup>
      </StatusBar>
      <NavBar>
        <BackIcon viewBox="79 754 123 501" preserveAspectRatio="none">
          <path d="M182,754 L202,801 119,1002 202,1208 182,1255 79,1002Z" fill="#231f20" />
        </BackIcon>
        <Title>ITINERARY</Title>
        <MenuButton><MenuLine /><MenuLine /><MenuLine /></MenuButton>
      </NavBar>
      <CardList>
        {stops.map(({ Map, ...s }) => (
          <Card key={s.day}>
            <CardHeader>
              <DateBox $tone={s.tone}>
                <Month>{s.month}</Month>
                <Day>{s.day}</Day>
              </DateBox>
              <Info>
                <Time>{s.time}</Time>
                <Name>{s.name}</Name>
              </Info>
              <Badge $tone={s.tone}>{s.status}</Badge>
            </CardHeader>
            <MapBox>
              <Map />
              <AddressBar>{s.address}</AddressBar>
            </MapBox>
            <SummaryButton>View Order Summary</SummaryButton>
          </Card>
        ))}
      </CardList>
    </Screen>
  );
}
